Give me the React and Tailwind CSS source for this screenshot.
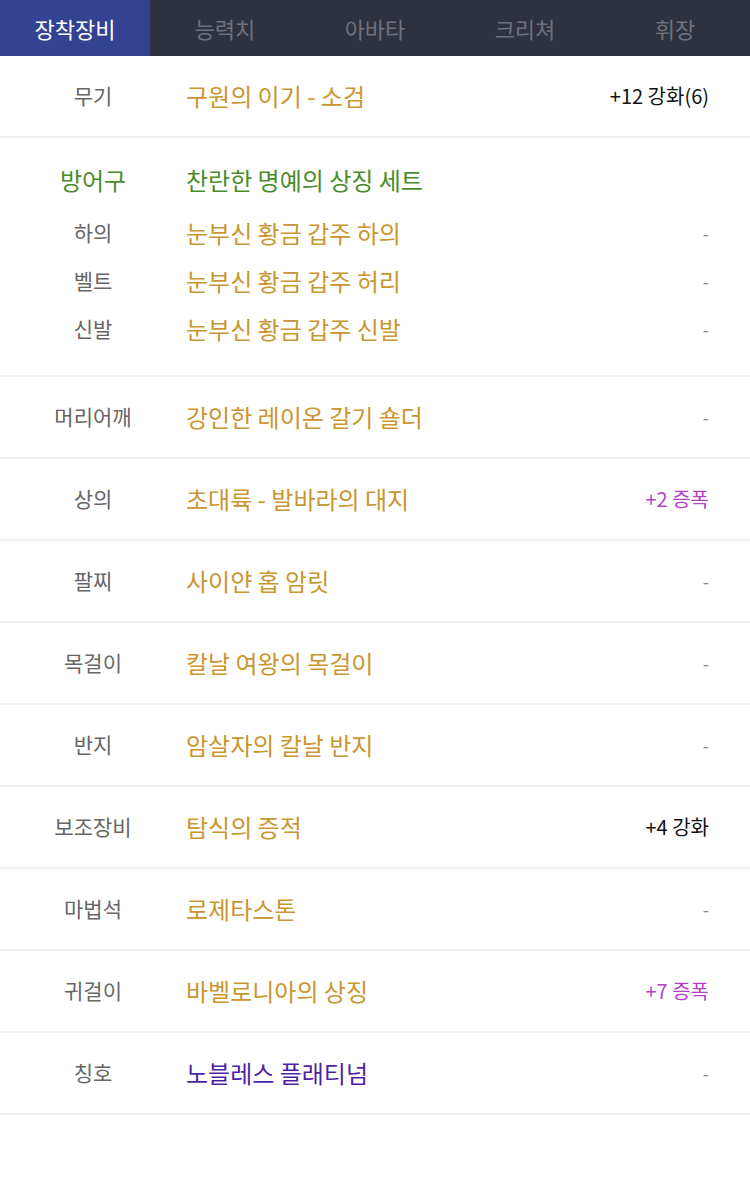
import React from 'react';

const tabs = ['장착장비', '능력치', '아바타', '크리쳐', '휘장'];

const rows = [
    { label: '머리어깨', name: '강인한 레이온 갈기 숄더', value: '-' },
    { label: '상의', name: '초대륙 - 발바라의 대지', value: '+2 증폭', tone: 'amp' },
    { label: '팔찌', name: '사이얀 홉 암릿', value: '-' },
    { label: '목걸이', name: '칼날 여왕의 목걸이', value: '-' },
    { label: '반지', name: '암살자의 칼날 반지', value: '-' },
    { label: '보조장비', name: '탐식의 증적', value: '+4 강화', tone: 'up' },
    { label: '마법석', name: '로제타스톤', value: '-' },
    { label: '귀걸이', name: '바벨로니아의 상징', value: '+7 증폭', tone: 'amp' },
    { label: '칭호', name: '노블레스 플래티넘', value: '-', nameColor: 'text-[#4f1fa6]' },
];

const armor = [
    { label: '하의', name: '눈부신 황금 갑주 하의' },
    { label: '벨트', name: '눈부신 황금 갑주 허리' },
    { label: '신발', name: '눈부신 황금 갑주 신발' },
];

const valueClass = (tone) => {
    if (tone === 'amp') return 'text-[20px] text-[#b43fc9]';
    if (tone === 'up') return 'text-[20px] text-[#111]';
    return 'text-[18px] text-[#8a8a8a]';
};

const Row = ({ label, name, value, tone, nameColor = 'text-[#c9962f]' }) => (
    <div className="flex items-center h-[82px] border-b-2 border-[#efefef]">
        <div className="w-[186px] text-center text-[21px] text-[#666]">{label}</div>
        <div className={`flex-1 text-[24px] ${nameColor}`}>{name}</div>
        <div className={`pr-[41px] ${valueClass(tone)}`}>{value}</div>
    </div>
);

export default function App() {
    return (
        <div className="w-[750px] h-[1189px] bg-white" style={{ fontFamily: '"Noto Sans CJK KR", "Noto Sans", sans-serif' }}>
            {/* tab bar */}
            <div className="flex h-[56px] bg-[#2e323f]">
                {tabs.map((t, i) => (
                    <div
                        key={t}
                        className={`w-[150px] flex items-center justify-center text-[22px] ${i === 0 ? 'bg-[#334391] text-white' : 'text-[#6e727c]'}`}
                    >
                        {t}
                    </div>
                ))}
            </div>

            <Row label="무기" name="구원의 이기 - 소검" value="+12 강화(6)" tone="up" />

            {/* armor set block */}
            <div className="flex flex-col pt-[23px] pb-[27px] border-b-2 border-[#efefef]">
                <div className="flex items-center h-[38px]">
                    <div className="w-[186px] text-center text-[24px] text-[#4a8c2b]">방어구</div>
                    <div className="flex-1 text-[24px] text-[#4a8c2b]">찬란한 명예의 상징 세트</div>
                </div>
                <div className="flex flex-col mt-[15px] gap-[10px]">
                    {armor.map((a) => (
                        <div key={a.label} className="flex items-center h-[38px]">
                            <div className="w-[186px] text-center text-[21px] text-[#666]">{a.label}</div>
                            <div className="flex-1 text-[24px] text-[#c9962f]">{a.name}</div>
                            <div className="pr-[41px] text-[18px] text-[#8a8a8a]">-</div>
                        </div>
                    ))}
                </div>
            </div>

            {rows.map((r) => (
                <Row key={r.label} {...r} />
            ))}
        </div>
    );
}
